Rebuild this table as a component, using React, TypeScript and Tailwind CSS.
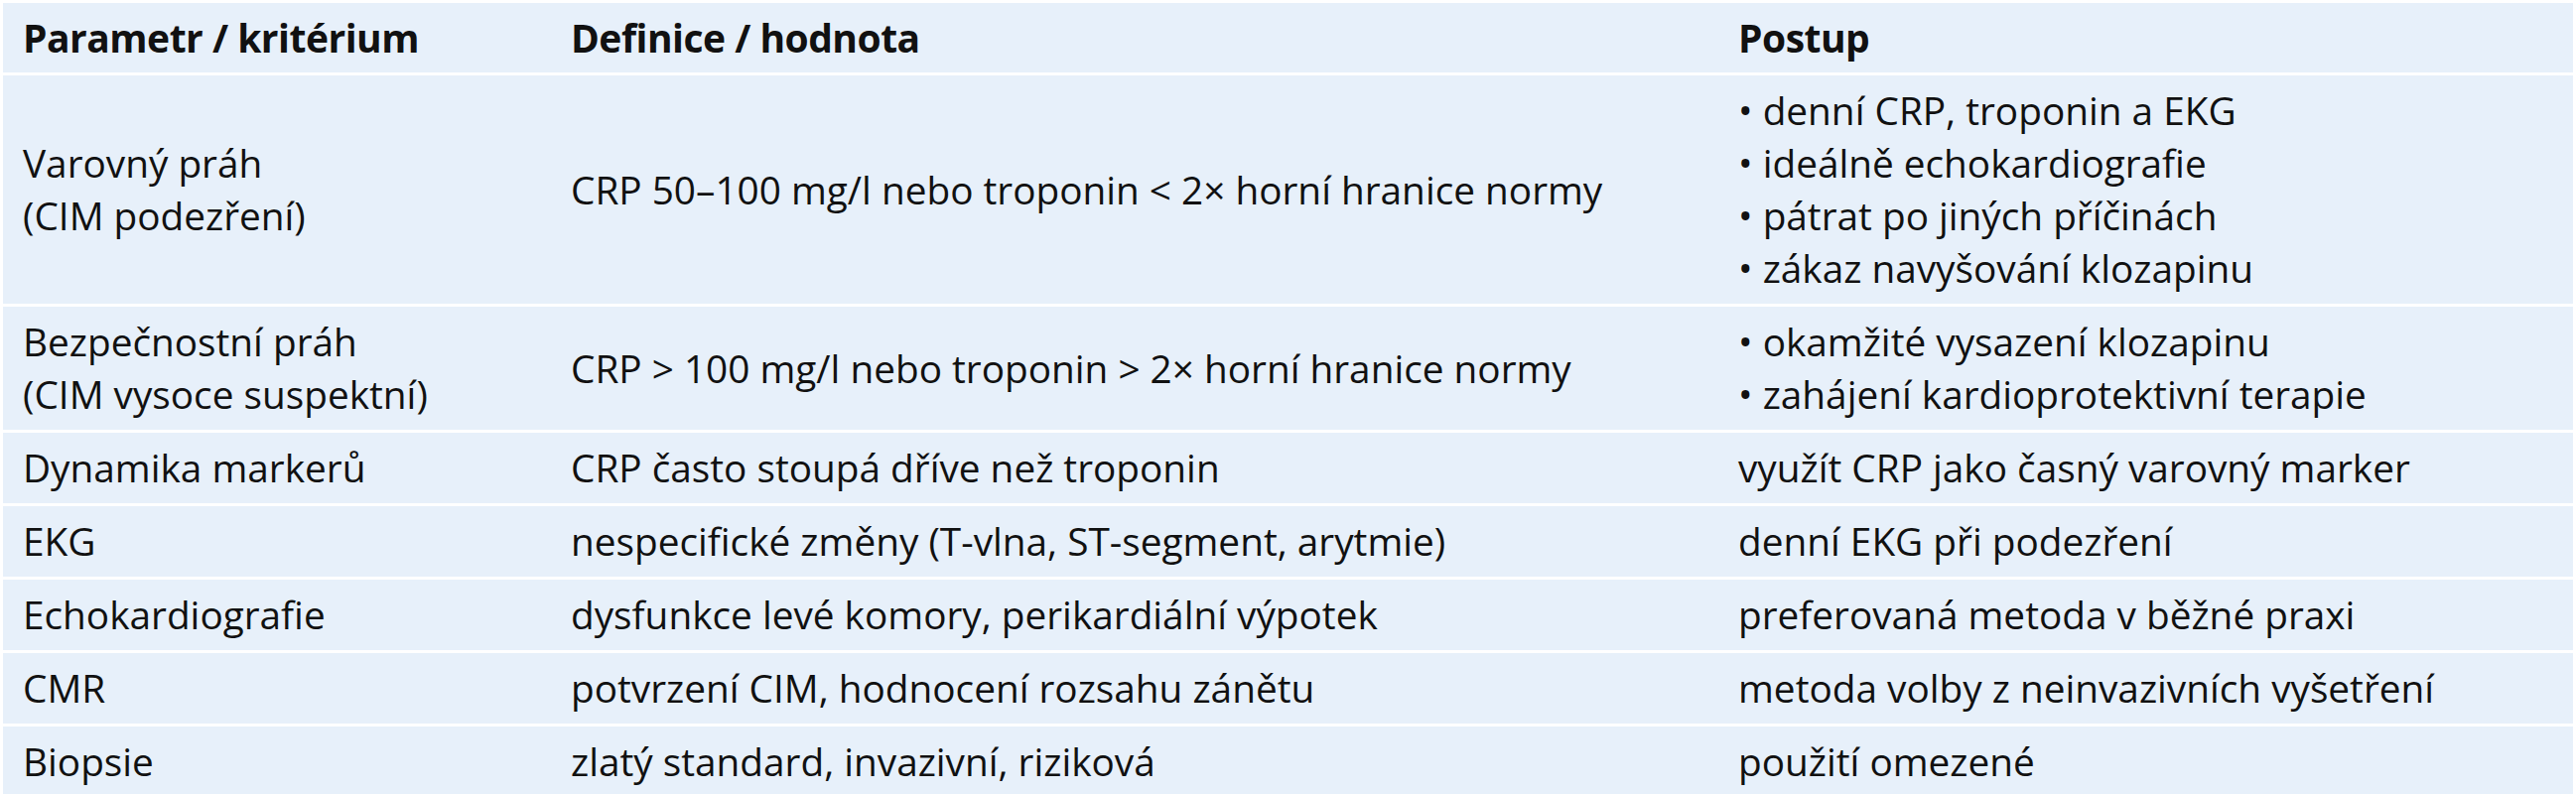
import React from "react";

type Row = { a: string[]; b: string; c: string[]; bullets?: boolean };

const rows: Row[] = [
  {
    a: ["Varovný práh", "(CIM podezření)"],
    b: "CRP 50–100 mg/l nebo troponin < 2× horní hranice normy",
    c: [
      "denní CRP, troponin a EKG",
      "ideálně echokardiografie",
      "pátrat po jiných příčinách",
      "zákaz navyšování klozapinu",
    ],
    bullets: true,
  },
  {
    a: ["Bezpečnostní práh", "(CIM vysoce suspektní)"],
    b: "CRP > 100 mg/l nebo troponin > 2× horní hranice normy",
    c: ["okamžité vysazení klozapinu", "zahájení kardioprotektivní terapie"],
    bullets: true,
  },
  {
    a: ["Dynamika markerů"],
    b: "CRP často stoupá dříve než troponin",
    c: ["využít CRP jako časný varovný marker"],
  },
  {
    a: ["EKG"],
    b: "nespecifické změny (T-vlna, ST-segment, arytmie)",
    c: ["denní EKG při podezření"],
  },
  {
    a: ["Echokardiografie"],
    b: "dysfunkce levé komory, perikardiální výpotek",
    c: ["preferovaná metoda v běžné praxi"],
  },
  {
    a: ["CMR"],
    b: "potvrzení CIM, hodnocení rozsahu zánětu",
    c: ["metoda volby z neinvazivních vyšetření"],
  },
  {
    a: ["Biopsie"],
    b: "zlatý standard, invazivní, riziková",
    c: ["použití omezené"],
  },
];

const cell =
  "bg-[#e7f0fa] flex flex-col justify-center py-[9px] leading-[53px] text-[38.75px] text-[#111111] whitespace-nowrap";

export default function App() {
  return (
    <div
      className="w-[2595px] h-[800px] overflow-hidden bg-white pt-[3px] px-[3px]"
      style={{ fontFamily: "'Open Sans', 'Noto Sans', sans-serif" }}
    >
      <div className="grid grid-cols-[551px_1176px_862px] gap-y-[3px]">
        <div className="bg-[#e7f0fa] h-[70px] flex items-center pl-[20px] text-[39px] font-bold text-[#111111] tracking-[-0.5px]">
          Parametr / kritérium
        </div>
        <div className="bg-[#e7f0fa] h-[70px] flex items-center pl-[21px] text-[39px] font-bold text-[#111111] tracking-[-0.5px]">
          Definice / hodnota
        </div>
        <div className="bg-[#e7f0fa] h-[70px] flex items-center pl-[21px] text-[39px] font-bold text-[#111111] tracking-[-0.5px]">
          Postup
        </div>
        {rows.map((r, i) => (
          <React.Fragment key={i}>
            <div className={`${cell} pl-[20px]`}>
              {r.a.map((t) => (
                <div key={t}>{t}</div>
              ))}
            </div>
            <div className={`${cell} pl-[21px]`}>
              <div>{r.b}</div>
            </div>
            <div className={`${cell} pl-[21px]`}>
              {r.c.map((t) => (
                <div key={t}>{r.bullets ? `• ${t}` : t}</div>
              ))}
            </div>
          </React.Fragment>
        ))}
      </div>
    </div>
  );
}
